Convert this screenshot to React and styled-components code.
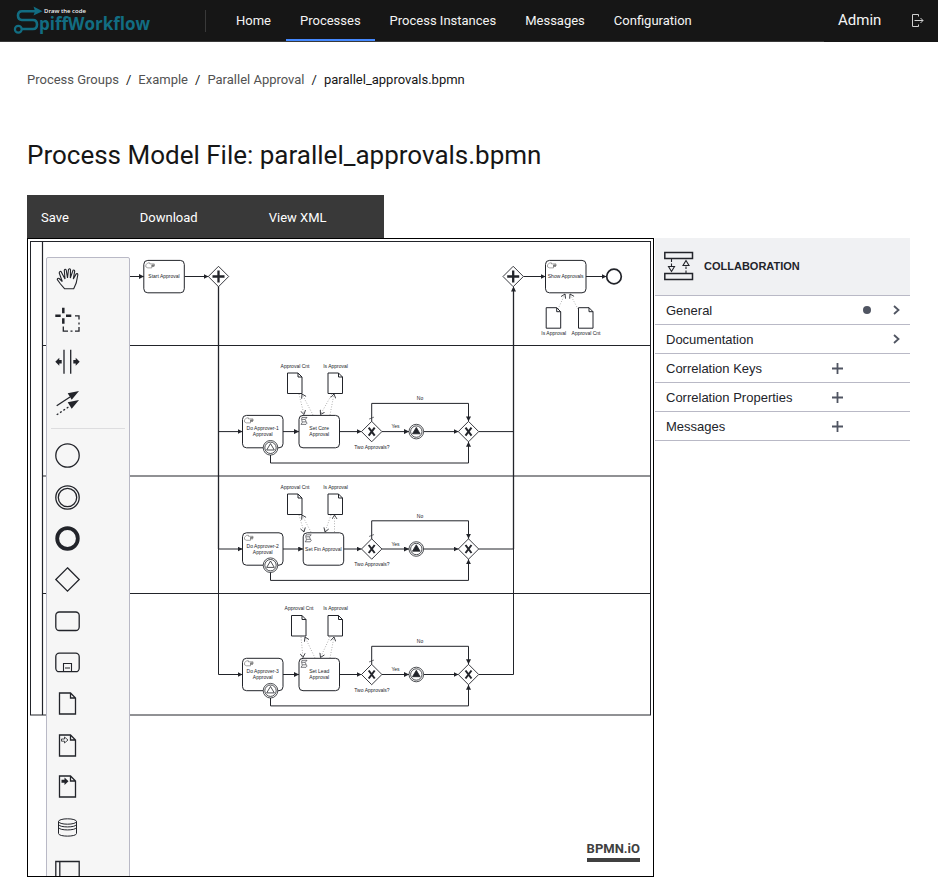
import React from "react";
import styled, { createGlobalStyle } from "styled-components";

const Global = createGlobalStyle`
  *, *::before, *::after { box-sizing: border-box; }
  body { margin: 0; background: #fff; color: #161616; font-family: Roboto, "Noto Sans", sans-serif; }
  button { font: inherit; border: 0; background: none; padding: 0; cursor: pointer; color: inherit; }
  a { text-decoration: none; color: inherit; }
  svg { display: block; }
`;

/* ---------- header ---------- */

const Header = styled.header`
  display: flex;
  height: 42px;
  background: #161616;
  color: #f4f4f4;
`;

const HeaderMain = styled.div`
  display: flex;
  flex: 1;
  align-items: center;
  border-bottom: 1px solid #393939;
`;

const LogoLink = styled.a`
  margin-left: 13px;
  width: 192px;
`;

const Nav = styled.nav`
  display: flex;
  align-items: center;
  align-self: stretch;
  &::before {
    content: "";
    width: 1px;
    height: 22px;
    margin-right: 16px;
    background: #393939;
  }
`;

const NavLink = styled.a`
  display: flex;
  align-items: center;
  align-self: stretch;
  padding: 2px 14px 0;
  margin-right: 1px;
  font-size: 13px;
  border-bottom: 2px solid ${(p) => (p.$active ? "#4589ff" : "transparent")};
`;

const HeaderSide = styled.div`
  display: flex;
  align-items: center;
  justify-content: space-between;
  width: 114px;
  padding: 0 14px 2px;
  font-size: 15px;
`;

/* ---------- page ---------- */

const Page = styled.main`
  padding: 0 28px 0 27px;
`;

const Crumbs = styled.nav`
  display: flex;
  gap: 7px;
  padding: 29px 0 50px;
  font-size: 13px;
  line-height: 18px;
  a { color: #525252; }
`;

const Title = styled.h1`
  margin: 0;
  font-size: 26px;
  font-weight: 400;
  line-height: 32px;
`;

const Toolbar = styled.div`
  display: flex;
  width: fit-content;
  margin-top: 24px;
  background: #393939;
  color: #fff;
`;

const ToolbarButton = styled.button`
  height: 43px;
  padding: 2px 57px 0 14px;
  font-size: 13px;
  text-align: left;
`;

const Editor = styled.section`
  display: flex;
  align-items: stretch;
  gap: 1px;
  height: calc(100vh - 255px);
  min-height: 500px;
`;

const Canvas = styled.div`
  position: relative;
  flex: 1;
  overflow: hidden;
  border: 1px solid #000;
`;

const Palette = styled.div`
  position: absolute;
  top: 18px;
  left: 18px;
  width: 84px;
  background: #f6f6f6;
  border: 1px solid #b9b9c6;
  border-radius: 2px;
  color: #22242a;
`;

const PaletteGroup = styled.div`
  display: grid;
  grid-template-rows: repeat(${(p) => p.$rows}, 1fr);
  height: ${(p) => p.$height}px;
`;

const PaletteButton = styled.button`
  display: grid;
  place-items: center;
  width: 41px;
`;

const Separator = styled.hr`
  height: 1px;
  margin: 5px 4px 6px;
  border: 0;
  background: #dddddf;
`;

const Attribution = styled.a`
  position: absolute;
  right: 13px;
  bottom: 14px;
  border-bottom: 4px solid #404040;
  color: #404040;
  font: bold 13px/18px Roboto, sans-serif;
`;

/* ---------- properties panel ---------- */

const Panel = styled.aside`
  width: 255px;
  color: #22242a;
  font-family: "Liberation Sans", Arial, sans-serif;
`;

const PanelHeader = styled.header`
  display: flex;
  align-items: center;
  gap: 10px;
  height: 58px;
  padding: 0 0 2px 9px;
  background: #f0f1f3;
  border-bottom: 1px solid #b9b9c6;
`;

const PanelTitle = styled.h2`
  margin: 0;
  font-size: 11px;
`;

const GroupRow = styled.button`
  display: grid;
  grid-template-columns: 1fr repeat(3, 29px);
  align-items: center;
  justify-items: center;
  width: 100%;
  height: 29px;
  padding-left: 11px;
  border-bottom: 1px solid #b9b9c6;
  font-size: 13px;
  span { justify-self: start; }
  svg { color: #505562; }
`;

const Dot = styled.i`
  grid-column: 3;
  width: 8px;
  height: 8px;
  border-radius: 50%;
  background: #505562;
`;

const AddIcon = styled.svg`
  grid-column: 2;
`;

const ArrowIcon = styled.svg`
  grid-column: 4;
`;

/* ---------- drawings ---------- */

const Logo = () => (
  <svg width="140" height="34" viewBox="13 4 140 34" role="img" aria-label="SpiffWorkflow">
    <path
      d="M35 11.200H22Q18 11.200 18 15.500T22 20H33Q37 20 37 24.500T33 29H22"
      fill="none"
      stroke="#126d82"
      strokeWidth="2.600"
    />
    <path d="M33.500 6.500L42.500 11.200L33.500 15.500L35 11.200Z" fill="#126d82" />
    <circle cx="18.300" cy="29.200" r="3.400" fill="none" stroke="#126d82" strokeWidth="2.200" />
    <text x="44" y="13" fontSize="6" fontWeight="600" fill="#f4f4f4" fontFamily="Open Sans, sans-serif">
      Draw the code
    </text>
    <text x="39" y="30" fontSize="17" fontWeight="700" fill="#126d82" fontFamily="Open Sans, sans-serif">
      piffWorkflow
    </text>
  </svg>
);

const LogoutIcon = () => (
  <svg width="13" height="13" viewBox="0 0 13 13" fill="none" stroke="#d0d0d0" strokeWidth="1">
    <path d="M7.500 2.500V.5H1.500V12.500H7.500V10.500M3.500 6.500H12M9.500 4L12 6.500L9.500 9" />
  </svg>
);

const DOC = "M7.500 5H18.500L23.500 10V26H7.500Z M18.500 5V10H23.500";

const paletteTools = [
  [
    "Hand tool",
    <path d="M12.700 25.800L8.500 21L5.300 16.500Q5.400 14.800 7.200 15.500L10.300 18.500L7.200 10Q7.500 8 9 8.500L13 16L12.300 7.200Q13.200 5.500 14.200 7L15.500 15L16.500 6.500Q17.700 5 18.500 6.700L18.300 15L21 7.300Q22.500 6.500 22.700 8.200L21.300 16L24.300 10.800Q26 10.200 25.800 12L24.200 20L21.700 25.800Z" strokeWidth="1.100" />,
  ],
  [
    "Lasso tool",
    <>
      <path d="M3.300 11.800H8.700M14 11.800H19.300M11.300 3.800V9.300M11.300 14.300V19.800" strokeWidth="2.500" />
      <path d="M11.300 22.500V27.200H16M18.500 27.200H20.500M23 27.200H27V23M27 20.500V18.500M27 15.500V11.800H23" />
    </>,
  ],
  [
    "Create/remove space",
    <>
      <path d="M12 3.700V27.700M18.700 3.700V27.700" />
      <path d="M3.300 15.700L7.300 11.700V14H9.700V17.400H7.300V19.700ZM27.700 15.700L23.700 11.700V14H21.300V17.400H23.700V19.700Z" fill="currentColor" stroke="none" />
    </>,
  ],
  [
    "Global connect tool",
    <>
      <path d="M4.700 18.800L18 10" />
      <path d="M4.700 27.800L18 19" strokeDasharray="2 2" />
      <path d="M27 4L15.700 6.200L19.700 12.800ZM27 13L15.700 15.200L19.700 21.800Z" fill="currentColor" stroke="none" />
    </>,
  ],
];

const paletteShapes = [
  ["Start event", <circle cx="15.500" cy="15.500" r="11.700" />],
  [
    "Intermediate event",
    <>
      <circle cx="15.500" cy="15.500" r="11.700" />
      <circle cx="15.500" cy="15.500" r="9.200" />
    </>,
  ],
  ["End event", <circle cx="15.500" cy="15.500" r="10.300" strokeWidth="3.800" />],
  ["Gateway", <path d="M15.500 3.800L27.200 15.500L15.500 27.200L3.800 15.500Z" />],
  ["Task", <rect x="3.800" y="6" width="23.400" height="18.500" rx="3.500" />],
  [
    "Expanded sub-process",
    <>
      <rect x="3.800" y="6.200" width="23.400" height="18.500" rx="3.500" />
      <path d="M11.500 24.500V16.500H19.500V24.500M13 21H18" strokeWidth="1.100" />
    </>,
  ],
  ["Data object", <path d={DOC} />],
  [
    "Data input",
    <>
      <path d={DOC} />
      <path d="M9.500 9V11.200H12.500V13L16 10L12.500 7V9Z" strokeWidth=".8" />
    </>,
  ],
  [
    "Data output",
    <>
      <path d={DOC} />
      <path d="M9.500 8.800V11.700H12.500V14L16.500 10.200L12.500 6.500V8.800Z" fill="currentColor" stroke="none" />
    </>,
  ],
  [
    "Data store",
    <>
      <ellipse cx="15.500" cy="9.500" rx="9" ry="2.700" strokeWidth="1" />
      <path d="M6.500 9.500V21.500C6.500 25 24.500 25 24.500 21.500V9.500M6.500 12.300C6.500 15.800 24.500 15.800 24.500 12.300M6.500 15.300C6.500 18.800 24.500 18.800 24.500 15.300" strokeWidth="1" />
    </>,
  ],
  ["Pool", <path d="M3.800 7.500H27.200V25H3.800ZM7.800 7.500V25" />],
];

const PaletteItems = ({ items, height }) => (
  <PaletteGroup $rows={items.length} $height={height}>
    {items.map(([label, drawing]) => (
      <PaletteButton key={label} type="button" aria-label={label}>
        <svg width="31" height="31" viewBox="0 0 31 31" fill="none" stroke="currentColor" strokeWidth="1.300">
          {drawing}
        </svg>
      </PaletteButton>
    ))}
  </PaletteGroup>
);

/* ---------- diagram ---------- */

const INK = "#22242a";

const DiagramSvg = styled.svg`
  width: 625px;
  height: 637px;
  text {
    font: 5px "Liberation Sans", Arial, sans-serif;
    text-anchor: middle;
    fill: ${INK};
    stroke: none;
  }
`;

const Flow = ({ d }) => <path d={d} markerEnd="url(#flow-end)" />;
const Association = ({ d }) => (
  <path d={d} stroke="#777" strokeWidth=".7" strokeDasharray=".8 1.800" markerEnd="url(#assoc-end)" />
);

const TaskType = ({ x, y, kind }) =>
  kind === "script" ? (
    <path d={`M${x + 3} ${y + 2}H${x + 8}Q${x + 5} ${y + 4} ${x + 7} ${y + 6}T${x + 7} ${y + 9}H${x + 2}Q${x + 4} ${y + 7} ${x + 3} ${y + 5.5}T${x + 3} ${y + 2}M${x + 3} ${y + 4}H${x + 6}M${x + 3.5} ${y + 6.500}H${x + 7}`} strokeWidth=".6" />
  ) : (
    <g strokeWidth=".6" stroke="#666">
      <path d={`M${x + 2} ${y + 4.500}L${x + 4} ${y + 2.500}H${x + 6}L${x + 6} ${y + 3.500}H${x + 10.500}V${y + 4.500}H${x + 8}V${y + 7.5}H${x + 4}L${x + 2} ${y + 6.500}Z`} />
      <path d={`M${x + 8} ${y + 5}H${x + 11}M${x + 8} ${y + 6}H${x + 10.500}`} stroke="#333" />
    </g>
  );

const Task = ({ x, cy, lines, kind = "manual" }) => (
  <g>
    <rect x={x} y={cy - 16.2} width="40.500" height="32.400" rx="4" fill="#fff" />
    <TaskType x={x} y={cy - 16.2} kind={kind} />
    {lines.map((line, i) => (
      <text key={line} x={x + 20.2} y={cy + 1.6 + (lines.length > 1 ? (i ? 2.900 : -2.900) : 0)}>
        {line}
      </text>
    ))}
  </g>
);

const Gateway = ({ x, y, parallel }) => (
  <g>
    <path d={`M${x} ${y - 10.2}l10.200 10.200l-10.200 10.200l-10.200-10.200Z`} fill="#fff" strokeWidth=".9" />
    {parallel ? (
      <path d={`M${x - 6} ${y}h12M${x} ${y - 6}v12`} strokeWidth="2.300" />
    ) : (
      <path d={`M${x - 3} ${y - 4}l6 8M${x + 3} ${y - 4}l-6 8`} strokeWidth="2" />
    )}
  </g>
);

const SignalEvent = ({ x, y, filled }) => (
  <g strokeWidth=".8">
    <circle cx={x} cy={y} r="7.300" fill="#fff" />
    <circle cx={x} cy={y} r="5.700" />
    <path d={`M${x} ${y - 4.2}l3.800 6.400h-7.600Z`} fill={filled ? INK : "#fff"} />
  </g>
);

const DataObject = ({ x, y, label, labelY }) => (
  <g>
    <path d={`M${x} ${y}h10.500l4 4v16.500h-14.500ZM${x + 10.5} ${y}v4h4`} fill="#fff" />
    <text x={x + 7.5} y={labelY}>{label}</text>
  </g>
);

const lanes = [
  {
    cy: 431.6, n: 1, taskX: 299, task: ["Set Core", "Approval"], docY: 373, docX: 287.5, labelY: 368,
    links: ["M299 394L304 414.500", "M313 415L302 394", "M332 394L320.500 414.500", "M330 415L334 394"],
  },
  {
    cy: 549, n: 2, taskX: 303.2, task: ["Set Fin Approval"], docY: 494, docX: 287.5, labelY: 489,
    links: ["M299 515L304 532", "M311 532L302 515", "M331 515L325 532", "M334.500 532V515"],
  },
  {
    cy: 674.5, n: 3, taskX: 299, task: ["Set Lead", "Approval"], docY: 615.5, docX: 291.5, labelY: 610,
    links: ["M301 637L303 657.500", "M315 658L305 637", "M330 637L320.500 657.500", "M330 658L334 637"],
  },
];

const ApprovalLane = ({ cy, n, taskX, task, docX, docY, labelY, links }) => (
  <g>
    <Flow d={`M283 ${cy}H${taskX}`} />
    <Flow d={`M${taskX + 40.5} ${cy}H361.500`} />
    <Flow d={`M382 ${cy}H409`} />
    <Flow d={`M423.500 ${cy}H458.500`} />
    <path d={`M478.700 ${cy}H513.500`} />
    <Flow d={`M371.700 ${cy - 10}V${cy - 28.2}H468.500V${cy - 10.2}`} />
    <Flow d={`M270.500 ${cy + 23}V${cy + 31.4}H468.500V${cy + 10.2}`} />
    <path d={`M369 ${cy - 12.5}l5-2`} strokeWidth=".6" />
    <Task x={242.5} cy={cy} lines={[`Do Approver-${n}`, "Approval"]} />
    <Task x={taskX} cy={cy} lines={task} kind="script" />
    <SignalEvent x={270.5} y={cy + 16.2} />
    <Gateway x={371.7} y={cy} />
    <SignalEvent x={416.3} y={cy} filled />
    <Gateway x={468.5} y={cy} />
    <DataObject x={docX} y={docY} label="Approval Cnt" labelY={labelY} />
    <DataObject x={328} y={docY} label="Is Approval" labelY={labelY} />
    {links.map((d) => <Association key={d} d={d} />)}
    <text x="420" y={cy - 31.5}>No</text>
    <text x="395.500" y={cy - 3.5}>Yes</text>
    <text x="372" y={cy + 17.2}>Two Approvals?</text>
  </g>
);

const Diagram = () => (
  <DiagramSvg viewBox="28 239 625 637" fill="none" stroke={INK} strokeWidth="1">
    <defs>
      <marker id="flow-end" viewBox="0 0 5 5" refX="5" refY="2.500" markerWidth="5" markerHeight="5" markerUnits="userSpaceOnUse" orient="auto">
        <path d="M0 0L5 2.500L0 5Z" fill={INK} stroke="none" />
      </marker>
      <marker id="assoc-end" viewBox="0 0 5 6" refX="4.500" refY="3" markerWidth="5" markerHeight="6" markerUnits="userSpaceOnUse" orient="auto">
        <path d="M.5 .5L4.500 3L.5 5.500" fill="none" stroke={INK} strokeWidth=".8" />
      </marker>
    </defs>
    <rect x="30.500" y="241.500" width="620" height="473.500" />
    <path d="M42.500 241.500V715M42.500 345.500H650.500M42.500 476H650.500M42.500 593.500H650.500" strokeWidth="1.200" />
    <Flow d="M110 276.500H144" />
    <Flow d="M184.500 276.500H208.500" />
    <Flow d="M523.500 276.500H545.500" />
    <Flow d="M586 276.500H606.500" />
    <path d="M218.500 286V549" strokeWidth="1.300" />
    <Flow d="M218.500 431.600H242.500" />
    <Flow d="M218.500 549H242.500" />
    <Flow d="M218.500 549V674.500H242.500" />
    <path d="M513.500 549V288" strokeWidth="1.300" />
    <Flow d="M513.500 674.500V286.500" />
    <Task x={143.8} cy={276.6} lines={["Start Approval"]} />
    <Gateway x={218.5} y={276.5} parallel />
    <Gateway x={513.2} y={276.5} parallel />
    <Task x={545.5} cy={276.6} lines={["Show Approvals"]} />
    <circle cx="614" cy="276.500" r="7.300" strokeWidth="1.700" />
    <DataObject x={546.2} y={307.7} label="Is Approval" labelY={335} />
    <DataObject x={578.5} y={307.7} label="Approval Cnt" labelY={335} />
    <Association d="M558 309L565 294" />
    <Association d="M578 309L570 294" />
    {lanes.map((lane) => <ApprovalLane key={lane.n} {...lane} />)}
  </DiagramSvg>
);

const CollaborationIcon = () => (
  <svg width="30" height="30" viewBox="0 0 30 30" fill="none" stroke="#22242a" strokeWidth="1.500">
    <path d="M.8 1.500H28.500V7.500H.8ZM.8 22.500H28.500V28.500H.8Z" />
    <path d="M7.500 8V11M7.500 12.500V15M22 22V19.500M22 18V15.500" strokeWidth="1.100" />
    <path d="M4.500 15.500H10.500L7.500 20.500ZM19 14.500H25L22 9.500Z" strokeWidth="1.100" />
  </svg>
);

const groups = [
  { name: "General", filled: true, arrow: true },
  { name: "Documentation", arrow: true },
  { name: "Correlation Keys" },
  { name: "Correlation Properties" },
  { name: "Messages" },
];

const navItems = ["Home", "Processes", "Process Instances", "Messages", "Configuration"];

export default function App() {
  return (
    <>
      <Global />
      <Header>
        <HeaderMain>
          <LogoLink href="#"><Logo /></LogoLink>
          <Nav aria-label="Main">
            {navItems.map((item) => (
              <NavLink key={item} href="#" $active={item === "Processes"}>{item}</NavLink>
            ))}
          </Nav>
        </HeaderMain>
        <HeaderSide>
          <span>Admin</span>
          <button type="button" aria-label="Log out"><LogoutIcon /></button>
        </HeaderSide>
      </Header>
      <Page>
        <Crumbs aria-label="Breadcrumb">
          <a href="#">Process Groups</a>
          <span>/</span>
          <a href="#">Example</a>
          <span>/</span>
          <a href="#">Parallel Approval</a>
          <span>/</span>
          <span>parallel_approvals.bpmn</span>
        </Crumbs>
        <Title>Process Model File: parallel_approvals.bpmn</Title>
        <Toolbar>
          <ToolbarButton type="button">Save</ToolbarButton>
          <ToolbarButton type="button">Download</ToolbarButton>
          <ToolbarButton type="button">View XML</ToolbarButton>
        </Toolbar>
        <Editor>
          <Canvas>
            <Diagram />
            <Palette>
              <PaletteItems items={paletteTools} height={165} />
              <Separator />
              <PaletteItems items={paletteShapes} height={455} />
            </Palette>
            <Attribution href="#">BPMN.iO</Attribution>
          </Canvas>
          <Panel>
            <PanelHeader>
              <CollaborationIcon />
              <PanelTitle>COLLABORATION</PanelTitle>
            </PanelHeader>
            {groups.map((group) => (
              <GroupRow key={group.name} type="button">
                <span>{group.name}</span>
                {group.filled && <Dot />}
                {group.arrow ? (
                  <ArrowIcon width="10" height="10" viewBox="0 0 10 10" fill="none" stroke="currentColor" strokeWidth="1.800">
                    <path d="M3 1L7.500 5L3 9" />
                  </ArrowIcon>
                ) : (
                  <AddIcon width="11" height="11" viewBox="0 0 11 11" fill="none" stroke="currentColor" strokeWidth="1.800">
                    <path d="M5.500 0V11M0 5.500H11" />
                  </AddIcon>
                )}
              </GroupRow>
            ))}
          </Panel>
        </Editor>
      </Page>
    </>
  );
}
